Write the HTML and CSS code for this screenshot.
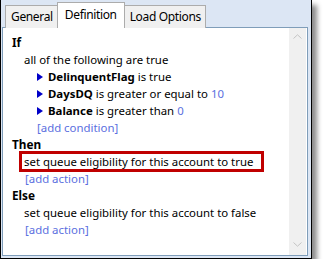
FILE: index.html
```html
<!DOCTYPE html>
<html>
<head>
<meta charset="utf-8">
<link rel="stylesheet" href="styles.css">
</head>
<body>
<div class="window">
  <div class="tabs">
    <div class="tab">General</div>
    <div class="tab active">Definition</div>
    <div class="tab">Load Options</div>
  </div>
  <div class="panel">
    <div class="content">
      <div class="row head">If</div>
      <div class="row l1">all of the following are true</div>
      <div class="row l2"><span class="tri"></span><b>DelinquentFlag</b> is true</div>
      <div class="row l2"><span class="tri"></span><b>DaysDQ</b> is greater or equal to <span class="val">10</span></div>
      <div class="row l2"><span class="tri"></span><b>Balance</b> is greater than <span class="val">0</span></div>
      <div class="row l2b"><span class="link">[add condition]</span></div>
      <div class="row head">Then</div>
      <div class="row l1"><span class="boxed">set queue eligibility for this account to true</span></div>
      <div class="row l1a"><span class="link">[add action]</span></div>
      <div class="row head">Else</div>
      <div class="row l1">set queue eligibility for this account to false</div>
      <div class="row l1a"><span class="link">[add action]</span></div>
    </div>
    <div class="scrollbar">
      <svg class="chev" width="9" height="5" viewBox="0 0 9 5"><path d="M0.5 4.5 L4.5 0.8 L8.5 4.5" fill="none" stroke="#c4c4c4" stroke-width="1"/></svg>
      <svg class="chev" width="9" height="5" viewBox="0 0 9 5"><path d="M0.5 0.5 L4.5 4.2 L8.5 0.5" fill="none" stroke="#c4c4c4" stroke-width="1"/></svg>
    </div>
  </div>
</div>
</body>
</html>
```
FILE: styles.css
```css
html, body {
  margin: 0;
  padding: 0;
  background: #ffffff;
}
body {
  font-family: "Noto Sans", "Open Sans", sans-serif;
  font-size: 11.4px;
  color: #000;
}
.window {
  box-sizing: border-box;
  width: 312px;
  height: 259px;
  background: #dce6f4;
  border-left: 1px solid #000;
  border-right: 1px solid #000;
  border-bottom: 1px solid #000;
  padding: 0 3px 2px 1px;
  box-shadow: 5px 5px 5px rgba(0, 0, 0, 0.45);
  display: flex;
  flex-direction: column;
}
.tabs {
  display: flex;
  align-items: flex-end;
  height: 28px;
  padding-left: 3px;
  margin-bottom: -1px;
  position: relative;
  z-index: 1;
}
.tab {
  box-sizing: border-box;
  height: 23px;
  padding: 0 4px 0 5px;
  line-height: 21px;
  font-size: 12px;
  background: #f0f0f0;
  border: 1px solid #acacac;
  border-bottom: none;
  margin-left: -1px;
  letter-spacing: -0.35px;
}
.tab:first-child {
  margin-left: 0;
}
.tab.active {
  height: 26px;
  padding: 0 7px;
  line-height: 23px;
  background: #fff;
  border-color: #acacac;
  margin-left: -1px;
  margin-right: -1px;
  position: relative;
  z-index: 2;
}
.tab.active + .tab {
  margin-left: 0;
}
.panel {
  flex: 1;
  display: flex;
  background: #fff;
  border: 1px solid #7f9db9;
}
.content {
  flex: 1;
  padding: 6px 0 0 9px;
}
.row {
  line-height: 17px;
  height: 17px;
  white-space: nowrap;
}
.head {
  font-weight: bold;
  font-size: 11.8px;
}
.l1 {
  padding-left: 12px;
}
.l1a {
  padding-left: 13px;
}
.l2, .l2b {
  padding-left: 25px;
}
.l2 {
  display: flex;
  align-items: center;
}
.l2 b {
  margin-right: 3px;
}
.l2 .val {
  margin-left: 3px;
}
.tri {
  width: 0;
  height: 0;
  border-top: 4px solid transparent;
  border-bottom: 4px solid transparent;
  border-left: 6px solid #0000c8;
  margin-right: 5px;
}
.val, .link {
  color: #5b6fe0;
}
.boxed {
  display: inline-block;
  line-height: 15px;
  padding: 0 8px 0 2px;
  margin-left: -2px;
  outline: 3px solid #c00000;
}
.scrollbar {
  width: 17px;
  background: #f0f0f0;
  margin-right: 1px;
  display: flex;
  flex-direction: column;
  justify-content: space-between;
  align-items: center;
  padding: 6px 0 8px;
}
.chev {
  display: block;
}
```
